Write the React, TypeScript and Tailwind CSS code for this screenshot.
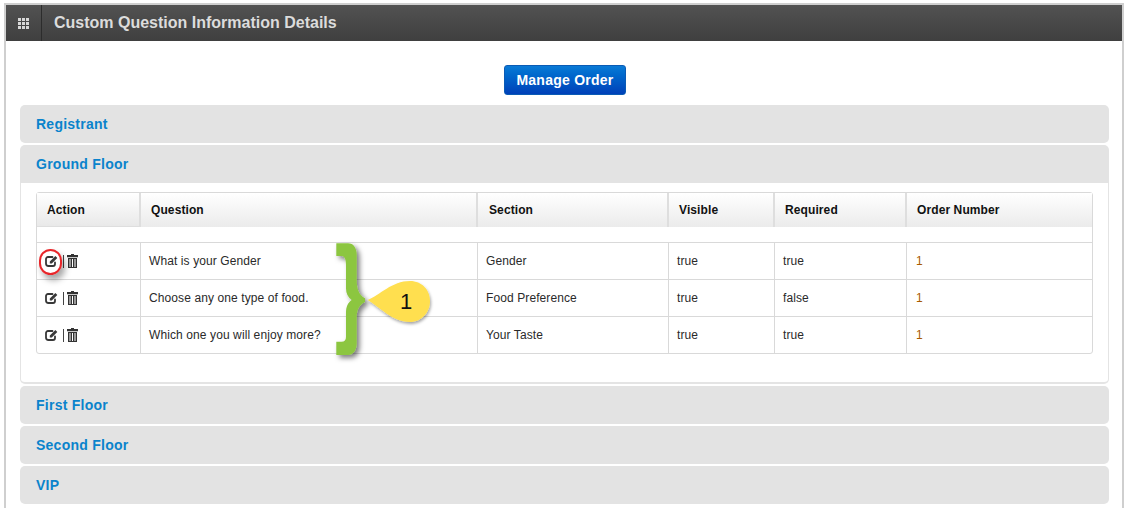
const rows = [
  { question: "What is your Gender", section: "Gender", visible: "true", required: "true", order: "1" },
  { question: "Choose any one type of food.", section: "Food Preference", visible: "true", required: "false", order: "1" },
  { question: "Which one you will enjoy more?", section: "Your Taste", visible: "true", required: "true", order: "1" },
];

const headers = ["Question", "Section", "Visible", "Required", "Order Number"];

function GridIcon() {
  return (
    <svg width="11" height="11" viewBox="0 0 11 11" fill="#d8d8d8">
      {[0, 4, 8].map((y) =>
        [0, 4, 8].map((x) => <rect key={`${x}-${y}`} x={x} y={y} width="3" height="3" />)
      )}
    </svg>
  );
}

function EditIcon() {
  return (
    <svg width="13" height="12" viewBox="0 0 13 12" fill="none">
      <path d="M10 7.500V9a2 2 0 0 1-2 2H3.500a2.500 2.500 0 0 1-2.500-2.500V4a2 2 0 0 1 2-2h4.500" stroke="#383838" strokeWidth="1.800" strokeLinecap="round" />
      <path d="M4.800 6.500 10.400 1l1.900 1.900L6.800 8.500H4.800z" fill="#383838" />
    </svg>
  );
}

function TrashIcon() {
  return (
    <svg width="11" height="14" viewBox="0 0 11 14" fill="#333">
      <path d="M4 0h3v1h4v2.200H0V1h4z" />
      <path d="M1 4h9v10H1zM2.500 5v8h1V5zM5 5v8h1V5zm2.500 0v8h1V5z" fillRule="evenodd" />
    </svg>
  );
}

function AccordionTitle({ title, open }: { title: string; open?: boolean }) {
  return (
    <div className={`h-[38px] flex items-center px-[16px] bg-[#e3e3e3] ${open ? "rounded-t-[5px]" : "rounded-[5px]"}`}>
      <span className="text-[14px] font-bold tracking-[0.25px] text-[#0a83cc]">{title}</span>
    </div>
  );
}

function ActionIcons({ marked }: { marked?: boolean }) {
  return (
    <div className="relative flex items-center pl-[8px]">
      <EditIcon />
      <span className="ml-[5px] mr-[3px] w-px h-[13px] bg-[#444]" />
      <TrashIcon />
      {marked && (
        <span className="absolute left-[2px] top-[-5px] w-[23px] h-[26px] rounded-full border-2 border-[#e8262a] shadow-[3px_5px_6px_rgba(0,0,0,0.35)]" />
      )}
    </div>
  );
}

function QuestionTable() {
  return (
    <table className="w-full table-fixed border-separate border-spacing-0 border border-[#d9d9d9] rounded-[3px] text-[12px] tracking-[0.1px] text-[#2a2a2a]">
      <colgroup>
        <col className="w-[104px]" />
        <col className="w-[337px]" />
        <col className="w-[191px]" />
        <col className="w-[106px]" />
        <col className="w-[132px]" />
        <col />
      </colgroup>
      <thead>
        <tr className="h-[34px]">
          <th className="p-0 pl-[10px] text-left font-bold text-[#111] bg-gradient-to-b from-white to-[#e9e9e9] border-b border-r-2 border-[#dedede]">
            Action
          </th>
          {headers.map((h, i) => (
            <th
              key={h}
              className={`p-0 text-left font-bold text-[#111] bg-gradient-to-b from-white to-[#ebebeb] ${h === "Section" ? "pl-[11px]" : "pl-[10px]"} ${i < 4 ? "border-r-2 border-[#dedede]" : ""}`}
            >
              {h}
            </th>
          ))}
        </tr>
      </thead>
      <tbody>
        <tr className="h-[16px]">
          <td colSpan={6} className="p-0 border-b border-[#d9d9d9]" />
        </tr>
        {rows.map((row, i) => (
          <tr key={row.question} className={i < 2 ? "h-[37px]" : "h-[36px]"}>
            <td className={`p-0 border-r border-[#d9d9d9] ${i < 2 ? "border-b" : ""}`}>
              <ActionIcons marked={i === 0} />
            </td>
            <td className={`p-0 pl-[8px] border-r border-[#d9d9d9] ${i < 2 ? "border-b" : ""}`}>{row.question}</td>
            <td className={`p-0 pl-[8px] border-r border-[#d9d9d9] ${i < 2 ? "border-b" : ""}`}>{row.section}</td>
            <td className={`p-0 pl-[8px] border-r border-[#d9d9d9] ${i < 2 ? "border-b" : ""}`}>{row.visible}</td>
            <td className={`p-0 pl-[8px] border-r border-[#d9d9d9] ${i < 2 ? "border-b" : ""}`}>{row.required}</td>
            <td className={`p-0 pl-[9px] text-[#a85a00] border-[#d9d9d9] ${i < 2 ? "border-b" : ""}`}>{row.order}</td>
          </tr>
        ))}
      </tbody>
    </table>
  );
}

function Callout() {
  return (
    <div className="absolute left-[309px] top-[47px] w-[110px] h-[135px]">
      <svg width="110" height="135" viewBox="0 0 110 135" className="absolute inset-0">
        <defs>
          <filter id="soft" x="-30%" y="-30%" width="170%" height="170%">
            <feDropShadow dx="3" dy="3" stdDeviation="2.500" floodColor="#000" floodOpacity="0.5" />
          </filter>
          <filter id="softer" x="-30%" y="-30%" width="170%" height="170%">
            <feDropShadow dx="1" dy="2" stdDeviation="1.500" floodColor="#000" floodOpacity="0.35" />
          </filter>
        </defs>
        <path
          d="M6.300 13.300H18C23.500 13.300 26.700 18 26.700 25V50C26.700 59 29 65 35 68.300V72C29 75 26.700 80 26.700 87V113C26.700 120 23.500 125 18 125H6.300V111.700H11.500C14.500 111.700 16 110 16 106.700V83C16 76.500 18 72.500 21.700 70C18 67.500 16 63.500 16 58.300V35C16 29 14.500 26 11.500 26H6.300Z"
          fill="#8cc63f"
          filter="url(#soft)"
        />
        <path
          d="M37.700 70C50 65 62 51 80 51C92 51 100 60 100 71C100 83 91 92 80 92C62 92 50 77 37.700 70Z"
          fill="#ffdf4f"
          filter="url(#softer)"
        />
      </svg>
      <span className="absolute left-[70px] top-[59px] text-[22px] leading-[26px] text-[#111]">1</span>
    </div>
  );
}

export default function App() {
  return (
    <div className="w-[1125px] h-[508px] overflow-hidden bg-white pt-[3px] pl-[4px] pr-[1px] font-['Liberation_Sans',Arial,sans-serif]">
      <div className="h-[520px] border-2 border-[#cfcfcf] bg-white">
        <div className="h-[36px] flex items-stretch bg-gradient-to-b from-[#525252] to-[#3f3f3f]">
          <div className="w-[36px] flex items-center justify-center border-r border-[#2c2c2c]">
            <GridIcon />
          </div>
          <h1 className="pl-[12px] flex items-center text-[16px] font-bold text-[#dcdcdc]">
            Custom Question Information Details
          </h1>
        </div>

        <div className="px-[14px]">
          <div className="flex justify-center pt-[24px] pb-[10px] pl-[2px]">
            <button
              type="button"
              className="w-[122px] h-[30px] rounded-[3px] bg-gradient-to-b from-[#0a7ad6] to-[#0040b8] border border-[#0a5bb5] text-[14px] font-bold tracking-[0.25px] text-white"
            >
              Manage Order
            </button>
          </div>

          <div className="flex flex-col gap-[2px] w-[1089px]">
            <AccordionTitle title="Registrant" />
            <div>
              <AccordionTitle title="Ground Floor" open />
              <div className="relative h-[201px] px-[15px] pt-[9px] border-x border-b-2 border-[#e4e4e4] rounded-b-[5px]">
                <QuestionTable />
                <Callout />
              </div>
            </div>
            <AccordionTitle title="First Floor" />
            <AccordionTitle title="Second Floor" />
            <AccordionTitle title="VIP" />
          </div>
        </div>
      </div>
    </div>
  );
}
